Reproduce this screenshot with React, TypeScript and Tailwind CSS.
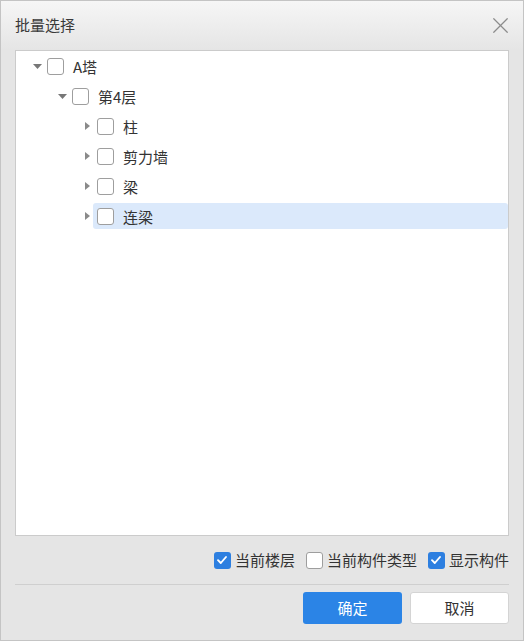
import { X } from 'lucide-react';

type Node = { label: string; level: number; expanded?: boolean; selected?: boolean };

const nodes: Node[] = [
  { label: 'A塔', level: 0, expanded: true },
  { label: '第4层', level: 1, expanded: true },
  { label: '柱', level: 2 },
  { label: '剪力墙', level: 2 },
  { label: '梁', level: 2 },
  { label: '连梁', level: 2, selected: true },
];

const indent = ['pl-[15px]', 'pl-[40px]', 'pl-[65px]'];

const Box = ({ checked }: { checked?: boolean }) =>
  checked ? (
    <span className="flex h-[17px] w-[17px] shrink-0 items-center justify-center rounded-[3px] bg-[#2d7fe0]">
      <svg width="12" height="12" viewBox="0 0 12 12" fill="none">
        <path d="M2 6.2 4.8 9 10 3" stroke="white" strokeWidth="1.9" strokeLinecap="round" strokeLinejoin="round" />
      </svg>
    </span>
  ) : (
    <span className="h-[17px] w-[17px] shrink-0 rounded-[3px] border border-[#9e9e9e] bg-white" />
  );

const Arrow = ({ expanded }: { expanded?: boolean }) => (
  <span className="flex w-[12px] shrink-0 items-center justify-center">
    {expanded ? (
      <svg width="9" height="5" viewBox="0 0 9 5">
        <path d="M0 0h9L4.5 5z" fill="#777" />
      </svg>
    ) : (
      <svg width="5" height="8" viewBox="0 0 5 8">
        <path d="M0 0v8l5-4z" fill="#8a8a8a" />
      </svg>
    )}
  </span>
);

const Option = ({ label, checked }: { label: string; checked?: boolean }) => (
  <label className="flex items-center">
    <Box checked={checked} />
    <span className="ml-[4px]">{label}</span>
  </label>
);

export default function App() {
  return (
    <div
      className="flex h-[641px] w-[524px] flex-col border border-[#c4c4c4] bg-[#e5e5e5] text-[15px] text-[#333]"
      style={{ fontFamily: '"Noto Sans CJK SC", "Noto Sans", sans-serif' }}
    >
      <div className="flex h-[49px] shrink-0 items-center justify-between bg-linear-to-b from-[#f6f6f6] to-[#e5e5e5] pl-[14px] pr-[9px]">
        <span className="-mt-[1px] text-[15px] text-[#3a3a3a]">批量选择</span>
        <X className="h-[27px] w-[27px] text-[#8c8c8c]" strokeWidth={1.1} />
      </div>

      <div className="ml-[14px] h-[486px] w-[494px] shrink-0 border border-[#cbcbcb] bg-white">
        {nodes.map((n) => (
          <div key={n.label} className={`flex h-[30px] items-center ${indent[n.level]}`}>
            <Arrow expanded={n.expanded} />
            <div
              className={`flex h-[26px] flex-1 items-center rounded-[3px] pl-1 ${n.selected ? 'bg-[#dbe9fb]' : ''}`}
            >
              <Box />
              <span className="ml-[9px] leading-none">{n.label}</span>
            </div>
          </div>
        ))}
      </div>

      <div className="ml-[14px] flex h-[49px] w-[494px] shrink-0 items-center justify-end gap-[11px] border-b border-[#cfcfcf]">
        <Option label="当前楼层" checked />
        <Option label="当前构件类型" />
        <Option label="显示构件" checked />
      </div>

      <div className="ml-[14px] flex w-[494px] justify-end gap-[8px] pt-[7px]">
        <button className="h-[32px] w-[99px] rounded-[3px] bg-[#2b84e6] text-[15px] text-white">确定</button>
        <button className="h-[32px] w-[99px] rounded-[3px] border border-[#d4d4d4] bg-white text-[15px] text-[#333]">
          取消
        </button>
      </div>
    </div>
  );
}
